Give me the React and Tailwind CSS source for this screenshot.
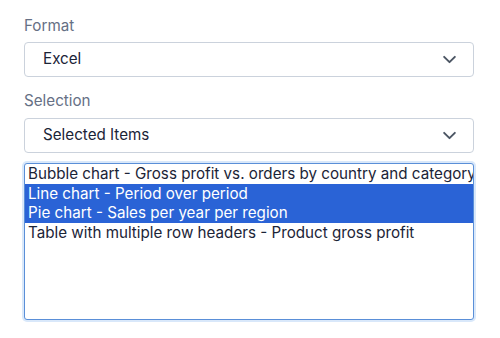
import React, { useState } from "react";

const items = [
  "Bubble chart - Gross profit vs. orders by country and category",
  "Line chart - Period over period",
  "Pie chart - Sales per year per region",
  "Table with multiple row headers - Product gross profit",
];

const Chevron = () => (
  <svg width="15" height="15" viewBox="0 0 14 14" fill="none" className="text-[#4b5563]">
    <path d="M2 4.5l5 5 5-5" stroke="currentColor" strokeWidth="1.8" strokeLinecap="round" strokeLinejoin="round" />
  </svg>
);

const Dropdown = ({ value }) => (
  <div className="flex items-center justify-between h-[35px] pl-[18px] pr-[16px] border border-[#cbd2dc] rounded-[4px] bg-white text-[15.2px] text-[#1b2437]">
    <span>{value}</span>
    <Chevron />
  </div>
);

export default function App() {
  const [selected] = useState([1, 2]);

  return (
    <div className="w-[500px] h-[338px] bg-white pl-[24px] pr-[26px] pt-[16px]" style={{ fontFamily: "Inter, 'Noto Sans', sans-serif" }}>
      <label className="block text-[15.2px] text-[#667085] leading-[20px] mb-[6px]">Format</label>
      <Dropdown value="Excel" />

      <label className="block text-[15.2px] text-[#667085] leading-[20px] mt-[14px] mb-[7px]">Selection</label>
      <Dropdown value="Selected Items" />

      <div className="mt-[10px] h-[157px] border border-[#5a8fd8] rounded-[3px] bg-white overflow-hidden shadow-[0_0_0_2px_rgba(147,190,240,0.35)]">
        {items.map((item, i) => (
          <div
            key={item}
            className={
              "px-[3px] text-[15.2px] leading-[19.5px] whitespace-nowrap overflow-hidden " +
              (selected.includes(i) ? "bg-[#2a63d6] text-white" : "text-[#1b2437]")
            }
          >
            {item}
          </div>
        ))}
      </div>
    </div>
  );
}
